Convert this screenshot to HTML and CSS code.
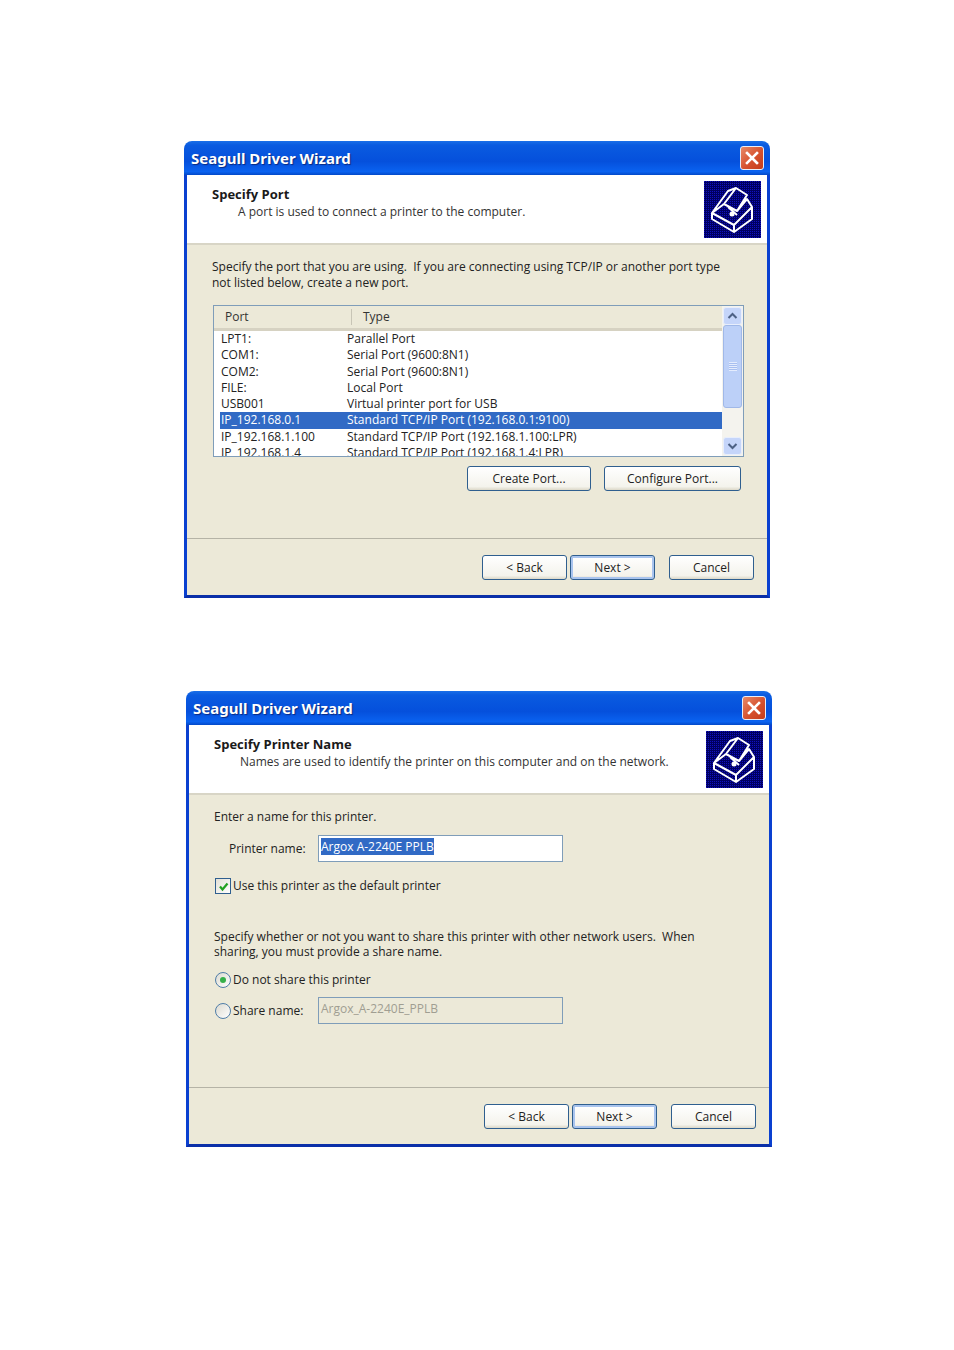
FILE: index.html
```html
<!DOCTYPE html>
<html lang="en">
<head>
  <meta charset="UTF-8">
  <title>Seagull Driver Wizard</title>
  <link rel="stylesheet" href="styles.css">
</head>
<body>

  <!-- Step: Specify Port -->
  <div class="window window-port">
    <div class="titlebar">
      <span class="title">Seagull Driver Wizard</span>
      <span class="close">
        <svg width="14" height="14" viewBox="0 0 14 14"><path d="M2 2L12 12M12 2L2 12" stroke="#fff" stroke-width="2.6" stroke-linecap="square"/></svg>
      </span>
    </div>
    <div class="frame">
      <div class="header">
        <div class="header-text">
          <h2>Specify Port</h2>
          <p>A port is used to connect a printer to the computer.</p>
        </div>
        <svg class="printer-icon" width="57" height="57" viewBox="0 0 57 57">
          <defs>
            <pattern id="dots1" width="2" height="2" patternUnits="userSpaceOnUse"><rect width="2" height="2" fill="#000060"/><rect width="1" height="1" fill="#1010c0"/></pattern>
          </defs>
          <rect width="57" height="57" fill="url(#dots1)"/>
          <path d="M8 32V38L30 51L48 38V26L43 18L33 30L20 23L8 32Z M8 32L30 44L48 26 M30 44V51 M8 32L24 10L32 7 M20 23L32 7L43 14L33 30 M24 26L33 34" fill="none" stroke="#fff" stroke-width="2" stroke-linejoin="round"/>
          <circle cx="28" cy="33" r="2.5" fill="#fff"/>
        </svg>
      </div>
      <div class="content content-port">
        <p class="intro">Specify the port that you are using.  If you are connecting using TCP/IP or another port type
not listed below, create a new port.</p>
        <div class="listview">
          <div class="list-main">
            <div class="list-head">
              <span class="col-head col-head-port">Port</span>
              <span class="col-head">Type</span>
            </div>
            <div class="rows">
              <div class="row"><span class="cell-port">LPT1:</span><span>Parallel Port</span></div>
              <div class="row"><span class="cell-port">COM1:</span><span>Serial Port (9600:8N1)</span></div>
              <div class="row"><span class="cell-port">COM2:</span><span>Serial Port (9600:8N1)</span></div>
              <div class="row"><span class="cell-port">FILE:</span><span>Local Port</span></div>
              <div class="row"><span class="cell-port">USB001</span><span>Virtual printer port for USB</span></div>
              <div class="row selected"><span class="cell-port">IP_192.168.0.1</span><span>Standard TCP/IP Port (192.168.0.1:9100)</span></div>
              <div class="row"><span class="cell-port">IP_192.168.1.100</span><span>Standard TCP/IP Port (192.168.1.100:LPR)</span></div>
              <div class="row"><span class="cell-port">IP_192.168.1.4</span><span>Standard TCP/IP Port (192.168.1.4:LPR)</span></div>
            </div>
          </div>
          <div class="scrollbar">
            <div class="scroll-btn">
              <svg width="11" height="8" viewBox="0 0 11 8"><path d="M1.5 6L5.5 2L9.5 6" fill="none" stroke="#4d6185" stroke-width="2"/></svg>
            </div>
            <div class="scroll-thumb"><span class="grip"></span></div>
            <div class="scroll-track"></div>
            <div class="scroll-btn">
              <svg width="11" height="8" viewBox="0 0 11 8"><path d="M1.5 2L5.5 6L9.5 2" fill="none" stroke="#4d6185" stroke-width="2"/></svg>
            </div>
          </div>
        </div>
        <div class="port-actions">
          <button class="button button-create">Create Port...</button>
          <button class="button button-config">Configure Port...</button>
        </div>
      </div>
      <div class="footer">
        <button class="button button-nav">&lt; Back</button>
        <button class="button button-nav button-default">Next &gt;</button>
        <button class="button button-nav button-cancel">Cancel</button>
      </div>
    </div>
  </div>

  <!-- Step: Specify Printer Name -->
  <div class="window window-name">
    <div class="titlebar">
      <span class="title">Seagull Driver Wizard</span>
      <span class="close">
        <svg width="14" height="14" viewBox="0 0 14 14"><path d="M2 2L12 12M12 2L2 12" stroke="#fff" stroke-width="2.6" stroke-linecap="square"/></svg>
      </span>
    </div>
    <div class="frame">
      <div class="header">
        <div class="header-text">
          <h2>Specify Printer Name</h2>
          <p>Names are used to identify the printer on this computer and on the network.</p>
        </div>
        <svg class="printer-icon" width="57" height="57" viewBox="0 0 57 57">
          <defs>
            <pattern id="dots2" width="2" height="2" patternUnits="userSpaceOnUse"><rect width="2" height="2" fill="#000060"/><rect width="1" height="1" fill="#1010c0"/></pattern>
          </defs>
          <rect width="57" height="57" fill="url(#dots2)"/>
          <path d="M8 32V38L30 51L48 38V26L43 18L33 30L20 23L8 32Z M8 32L30 44L48 26 M30 44V51 M8 32L24 10L32 7 M20 23L32 7L43 14L33 30 M24 26L33 34" fill="none" stroke="#fff" stroke-width="2" stroke-linejoin="round"/>
          <circle cx="28" cy="33" r="2.5" fill="#fff"/>
        </svg>
      </div>
      <div class="content content-name">
        <p class="line">Enter a name for this printer.</p>
        <div class="field-row field-printer">
          <label class="field-label">Printer name:</label>
          <div class="textbox"><span class="text-selected">Argox A-2240E PPLB</span></div>
        </div>
        <div class="option option-check">
          <span class="checkbox">
            <svg width="11" height="11" viewBox="0 0 11 11"><path d="M2 5.5L4.5 8.5L9.5 2.5" fill="none" stroke="#21a121" stroke-width="2.2"/></svg>
          </span>
          <span>Use this printer as the default printer</span>
        </div>
        <p class="intro share-text">Specify whether or not you want to share this printer with other network users.  When
sharing, you must provide a share name.</p>
        <div class="option option-noshare">
          <span class="radio radio-on"></span>
          <span>Do not share this printer</span>
        </div>
        <div class="field-row field-share">
          <span class="radio"></span>
          <label class="share-label">Share name:</label>
          <div class="textbox textbox-disabled">Argox_A-2240E_PPLB</div>
        </div>
      </div>
      <div class="footer">
        <button class="button button-nav">&lt; Back</button>
        <button class="button button-nav button-default">Next &gt;</button>
        <button class="button button-nav button-cancel">Cancel</button>
      </div>
    </div>
  </div>

</body>
</html>
```

FILE: styles.css
```css
/* General Reset */
* {
  margin: 0;
  padding: 0;
  box-sizing: border-box;
}
body {
  background: white;
  color: #222;
  font-family: "Open Sans", "Noto Sans", sans-serif;
  font-size: 12px;
  height: 1350px;
  overflow: hidden;
  padding-top: 141px;
}

/* Window */
.window {
  width: 586px;
}
.window-port {
  margin-left: 184px;
  height: 457px;
}
.window-name {
  margin-left: 186px;
  margin-top: 93px;
  height: 456px;
}
.titlebar {
  height: 34px;
  border-radius: 8px 8px 0 0;
  background: linear-gradient(#1a6fe8 0%, #0a5be0 12%, #0550dc 60%, #0a62f0 90%, #0349c8 100%);
  display: flex;
  justify-content: space-between;
  align-items: center;
  padding: 0 6px 0 7px;
}
.title {
  color: white;
  font-family: "Noto Sans", sans-serif;
  font-size: 15px;
  font-weight: bold;
  text-shadow: 1px 1px 1px #0a2a80;
}
.close {
  width: 24px;
  height: 24px;
  border: 1px solid #e8eef8;
  border-radius: 3px;
  background: linear-gradient(135deg, #e88a68, #d6512e 55%, #c43c1a);
  display: flex;
  justify-content: center;
  align-items: center;
}
.frame {
  height: calc(100% - 34px);
  background: #ece9d8;
  border: 3px solid #0a40d0;
  border-top: none;
  border-bottom-color: #0a2fa8;
  display: flex;
  flex-direction: column;
}
.header {
  height: 70px;
  flex: none;
  background: white;
  border-bottom: 2px solid #d8d5c6;
  display: flex;
  justify-content: space-between;
  padding: 6px 6px 0 25px;
}
.header h2 {
  font-size: 13px;
  font-weight: bold;
  line-height: 17px;
  margin-top: 5px;
  color: #1a1a1a;
}
.header p {
  line-height: 17px;
  padding-left: 26px;
  color: #333;
}
.content {
  flex: 1;
  padding-left: 25px;
}
.content-port {
  padding-top: 14px;
}
.content-name {
  padding-top: 14px;
}
.intro {
  white-space: pre;
  line-height: 16px;
}

/* Port list */
.listview {
  width: 531px;
  height: 152px;
  margin: 14px 0 0 1px;
  border: 1px solid #7f9db9;
  background: white;
  display: flex;
  overflow: hidden;
}
.list-main {
  flex: 1;
  min-width: 0;
  overflow: hidden;
}
.list-head {
  height: 25px;
  background: #ece9d8;
  border-bottom: 3px solid #d6d2c2;
  display: flex;
  align-items: center;
  padding-left: 11px;
}
.col-head {
  padding-left: 11px;
  line-height: 16px;
  color: #333;
}
.col-head-port {
  width: 127px;
  padding-left: 0;
  border-right: 1px solid #c8c5b6;
}
.rows {
  padding: 0 0 0 6px;
}
.row {
  height: 16.3px;
  line-height: 16.3px;
  display: flex;
  padding-left: 1px;
  white-space: nowrap;
}
.row.selected {
  background: #316ac5;
  color: white;
}
.cell-port {
  width: 126px;
}
.scrollbar {
  width: 21px;
  flex: none;
  background: #f4f3ee;
  display: flex;
  flex-direction: column;
  padding: 1px 1px 1px 1px;
}
.scroll-btn {
  height: 18px;
  flex: none;
  background: #c5d5fa;
  border: 1px solid #e8eefc;
  border-radius: 3px;
  display: flex;
  justify-content: center;
  align-items: center;
}
.scroll-thumb {
  height: 83px;
  flex: none;
  background: #bcd0f8;
  border: 1px solid #a0b8e8;
  border-radius: 3px;
  display: flex;
  justify-content: center;
  align-items: center;
}
.grip {
  width: 8px;
  height: 9px;
  background: repeating-linear-gradient(#e4ecfd 0 1px, #a8bff0 1px 2px);
}
.scroll-track {
  flex: 1;
}
.port-actions {
  display: flex;
  margin-top: 9px;
}

/* Buttons */
.button {
  height: 25px;
  font-family: inherit;
  font-size: 12px;
  color: #222;
  background: linear-gradient(#ffffff, #f4f3ec 85%, #dcd8c8);
  border: 1px solid #2f5f8f;
  border-radius: 3px;
}
.button-create {
  width: 124px;
  margin-left: 255px;
}
.button-config {
  width: 137px;
  margin-left: 13px;
}
.footer {
  height: 57px;
  flex: none;
  border-top: 1px solid #b5b3a6;
  display: flex;
  padding: 16px 0 0 295px;
}
.button-nav {
  width: 85px;
}
.button-default {
  margin-left: 3px;
  box-shadow: inset 0 0 0 2px #a9c4ee;
}
.button-cancel {
  margin-left: 14px;
}

/* Printer name form */
.line {
  line-height: 16px;
}
.field-row {
  display: flex;
  align-items: center;
}
.field-printer {
  margin-top: 10px;
  padding-left: 15px;
}
.field-label {
  width: 89px;
}
.textbox {
  width: 245px;
  height: 27px;
  background: white;
  border: 1px solid #7f9db9;
  padding: 3px 0 0 2px;
  line-height: 16px;
}
.text-selected {
  background: #316ac5;
  color: white;
}
.option {
  display: flex;
  align-items: center;
  gap: 2px;
  line-height: 16px;
}
.option-check {
  margin-top: 16px;
}
.checkbox {
  width: 16px;
  height: 16px;
  margin-left: 1px;
  background: linear-gradient(135deg, #e2e0d6, #fff);
  border: 1px solid #2f5f8f;
  display: flex;
  justify-content: center;
  align-items: center;
}
.share-text {
  margin-top: 35px;
  line-height: 15px;
}
.option-noshare {
  margin-top: 13px;
}
.radio {
  width: 16px;
  height: 16px;
  margin-left: 1px;
  flex: none;
  border: 1.5px solid #4f7da8;
  border-radius: 50%;
  background: linear-gradient(135deg, #dcdad0, #fff);
  display: flex;
  justify-content: center;
  align-items: center;
}
.radio-on::after {
  content: "";
  width: 6px;
  height: 6px;
  border-radius: 50%;
  background: #36b04a;
}
.field-share {
  margin-top: 9px;
}
.share-label {
  width: 85px;
  margin-left: 2px;
}
.textbox-disabled {
  background: #ece9d8;
  color: #a09e92;
}
```
